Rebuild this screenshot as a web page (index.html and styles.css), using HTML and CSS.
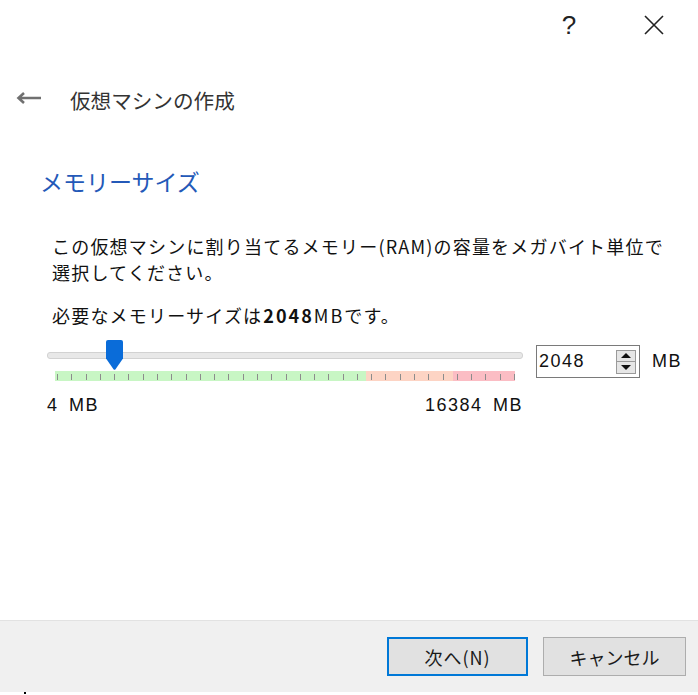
FILE: index.html
```html
<!DOCTYPE html>
<html lang="ja">
<head>
<meta charset="utf-8">
<title>仮想マシンの作成</title>
<link rel="stylesheet" href="styles.css">
</head>
<body>
<div class="window">
  <div class="titlebar">
    <span class="tb-btn help">?</span>
    <span class="tb-btn close">
      <svg width="20" height="20" viewBox="0 0 20 20"><path d="M1 1 L19 19 M19 1 L1 19" stroke="#222" stroke-width="1.6" fill="none"/></svg>
    </span>
  </div>
  <div class="header">
    <svg class="back" width="26" height="12" viewBox="0 0 26 12"><path d="M25 6 H3 M8 1 L2.5 6 L8 11" stroke="#707070" stroke-width="2.6" fill="none"/></svg>
    <h1 class="title">仮想マシンの作成</h1>
  </div>
  <main class="content">
    <h2 class="section">メモリーサイズ</h2>
    <p class="desc">この仮想マシンに割り当てるメモリー(RAM)の容量をメガバイト単位で<br>選択してください。</p>
    <p class="desc note">必要なメモリーサイズは<b>2048</b><span class="mb">MB</span>です。</p>
    <div class="slider-row">
      <div class="slider">
        <div class="track">
          <div class="groove"></div>
          <svg class="handle" width="17" height="30" viewBox="0 0 17 30"><path d="M2 0 H15 Q17 0 17 2 V18.5 L9.5 29.3 Q8.5 30.3 7.5 29.3 L0 18.5 V2 Q0 0 2 0 Z" fill="#0a6cd9"/></svg>
        </div>
        <div class="ticks">
          <i></i><i></i><i></i><i></i><i></i><i></i><i></i><i></i><i></i><i></i><i></i>
          <i></i><i></i><i></i><i></i><i></i><i></i><i></i><i></i><i></i><i></i><i></i>
          <i></i><i></i><i></i><i></i><i></i><i></i><i></i><i></i><i></i><i></i><i></i>
        </div>
      </div>
      <div class="spin">
        <span class="spin-value">2048</span>
        <span class="spin-btns">
          <span class="spin-up"><span class="tri-up"></span></span>
          <span class="spin-down"><span class="tri-down"></span></span>
        </span>
      </div>
      <span class="unit">MB</span>
    </div>
    <div class="range-labels"><span>4 MB</span><span>16384 MB</span></div>
  </main>
  <footer class="footer">
    <button class="btn primary">次へ(N)</button>
    <button class="btn cancel">キャンセル</button>
  </footer>
  <div class="bottom"><span class="dot"></span></div>
</div>
</body>
</html>
```

FILE: styles.css
```css
html, body {
  margin: 0;
  padding: 0;
  background: #ffffff;
}

body {
  font-family: "Noto Sans CJK JP", "Noto Sans", sans-serif;
  color: #1a1a1a;
}

.window {
  width: 698px;
  height: 695px;
  display: flex;
  flex-direction: column;
  overflow: hidden;
}

/* title bar */
.titlebar {
  height: 50px;
  display: flex;
  justify-content: flex-end;
  align-items: center;
  padding-right: 34px;
  gap: 69px;
  box-sizing: border-box;
}

.tb-btn {
  display: flex;
  align-items: center;
  justify-content: center;
}

.help {
  font-family: "Liberation Sans", Arial, sans-serif;
  font-size: 26px;
  color: #222;
  line-height: 26px;
  width: 12px;
}

.close {
  width: 20px;
  height: 20px;
}

/* header */
.header {
  margin-top: 30px;
  height: 40px;
  display: flex;
  align-items: center;
  padding-left: 16px;
}

.back {
  margin-top: -5px;
}

.title {
  margin: -1px 0 0 28px;
  font-size: 20.6px;
  font-weight: 400;
  color: #333333;
  line-height: 28px;
}

/* content */
.content {
  flex: 1;
  padding-left: 40px;
}

.section {
  margin: 46px 0 0 0;
  font-size: 23px;
  font-weight: 400;
  line-height: 30px;
  color: #2459b8;
}

.desc {
  margin: 37px 0 0 12px;
  font-size: 18px;
  line-height: 26px;
  letter-spacing: 1.2px;
  color: #111;
}

.note {
  margin-top: 17px;
}

.note b {
  font-weight: 700;
  letter-spacing: 2px;
  padding-left: 1px;
}

.note .mb {
  letter-spacing: 2px;
}

.slider-row {
  margin: 12px 0 0 7px;
  display: flex;
  align-items: flex-start;
}

.slider {
  width: 476px;
}

.track {
  position: relative;
  height: 30px;
}

.groove {
  position: absolute;
  left: 0;
  right: 0;
  top: 12px;
  height: 5px;
  background: #e8e8e8;
  border: 1px solid #d2d2d2;
  border-radius: 3px;
}

.handle {
  position: absolute;
  left: 59px;
  top: 0;
}

.ticks {
  margin: 1px 0 0 8px;
  width: 460px;
  height: 10px;
  box-sizing: border-box;
  padding: 0 0 1px 2px;
  display: flex;
  justify-content: space-between;
  align-items: flex-end;
  background: linear-gradient(90deg, #c8f6c4 0 311px, #fdd4c4 311px 398px, #fbbdc4 398px 460px);
}

.ticks i {
  display: block;
  width: 1px;
  height: 6px;
  background: #8c8c8c;
}

.spin {
  margin: 5px 0 0 13px;
  width: 104px;
  height: 33px;
  box-sizing: border-box;
  border: 1px solid #7a7a7a;
  display: flex;
  align-items: center;
  padding-left: 2px;
  background: #fff;
}

.spin-value {
  font-family: "Liberation Sans", Arial, sans-serif;
  font-size: 18px;
  letter-spacing: 1.5px;
  color: #111;
}

.spin-btns {
  margin-left: auto;
  margin-right: 3px;
  width: 20px;
  height: 24px;
  box-sizing: border-box;
  border: 1px solid #9a9a9a;
  background: #e6e6e6;
  display: flex;
  flex-direction: column;
}

.spin-up, .spin-down {
  flex: 1;
  display: flex;
  align-items: center;
  justify-content: center;
}

.spin-up {
  border-bottom: 1px solid #9a9a9a;
}

.tri-up {
  width: 0;
  height: 0;
  border-left: 5px solid transparent;
  border-right: 5px solid transparent;
  border-bottom: 5px solid #111;
}

.tri-down {
  width: 0;
  height: 0;
  border-left: 5px solid transparent;
  border-right: 5px solid transparent;
  border-top: 5px solid #111;
}

.unit {
  margin: 11px 0 0 12px;
  font-family: "Liberation Sans", Arial, sans-serif;
  font-size: 18px;
  line-height: 21px;
  letter-spacing: 1.5px;
  color: #111;
}

.range-labels {
  margin: 14px 0 0 7px;
  width: 476px;
  display: flex;
  justify-content: space-between;
  font-family: "Liberation Sans", Arial, sans-serif;
  font-size: 18px;
  line-height: 21px;
  letter-spacing: 1.5px;
  word-spacing: 4px;
  color: #111;
}

/* footer */
.footer {
  height: 72px;
  box-sizing: border-box;
  background: #f0f0f0;
  border-top: 1px solid #e2e2e2;
  display: flex;
  justify-content: flex-end;
  align-items: flex-start;
  padding: 16px 12px 0 0;
  gap: 15px;
}

.btn {
  height: 39px;
  box-sizing: border-box;
  background: #e1e1e1;
  font-family: "Noto Sans CJK JP", "Noto Sans", sans-serif;
  font-size: 18px;
  color: #1a1a1a;
  padding: 0;
  display: flex;
  align-items: center;
  justify-content: center;
}

.primary {
  width: 141px;
  border: 2px solid #0078d7;
  letter-spacing: 1px;
}

.cancel {
  width: 143px;
  border: 1px solid #adadad;
}

.bottom {
  height: 3px;
  position: relative;
}

.dot {
  position: absolute;
  left: 24px;
  top: 0;
  width: 2px;
  height: 2px;
  background: #000;
}
```
